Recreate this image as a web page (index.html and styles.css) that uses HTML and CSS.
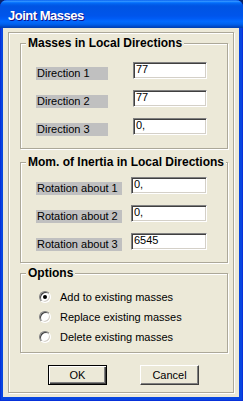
FILE: index.html
```html
<!DOCTYPE html>
<html lang="en">
<head>
    <meta charset="UTF-8">
    <title>Joint Masses</title>
    <link rel="stylesheet" href="styles.css">
</head>
<body>
    <div class="window">
        <div class="titlebar">Joint Masses</div>

        <div class="client">
            <div class="panel">

                <!-- Masses -->
                <fieldset class="group group-masses">
                    <legend>Masses in Local Directions</legend>
                    <div class="rows">
                        <span class="label">Direction 1</span><input class="field" value="77">
                        <span class="label">Direction 2</span><input class="field" value="77">
                        <span class="label">Direction 3</span><input class="field" value="0,">
                    </div>
                </fieldset>

                <!-- Inertia -->
                <fieldset class="group group-inertia">
                    <legend>Mom. of Inertia in Local Directions</legend>
                    <div class="rows">
                        <span class="label">Rotation about 1</span><input class="field" value="0,">
                        <span class="label">Rotation about 2</span><input class="field" value="0,">
                        <span class="label">Rotation about 3</span><input class="field" value="6545">
                    </div>
                </fieldset>

                <!-- Options -->
                <fieldset class="group group-options">
                    <legend>Options</legend>
                    <div class="options">
                        <div class="option"><span class="radio checked"></span>Add to existing masses</div>
                        <div class="option"><span class="radio"></span>Replace existing masses</div>
                        <div class="option"><span class="radio"></span>Delete existing masses</div>
                    </div>
                </fieldset>

                <div class="buttons">
                    <button class="btn btn-default">OK</button>
                    <button class="btn">Cancel</button>
                </div>
            </div>
        </div>
    </div>
</body>
</html>
```

FILE: styles.css
```css
/* Page */
body {
    margin: 0;
    background: #0a246a;
    font-family: "Liberation Sans", Arial, sans-serif;
    font-size: 11px;
    color: #000;
}

/* Window frame */
.window {
    width: 243px;
    height: 401px;
    box-sizing: border-box;
    display: flex;
    flex-direction: column;
    padding: 0 4px 4px 3px;
    background: #0846e0;
    border-radius: 7px 7px 0 0;
    box-shadow: inset 1px 0 #0831d9, inset -1px 0 #0831d9, inset 0 -1px #0831d9;
}

.titlebar {
    height: 28px;
    box-sizing: border-box;
    margin: 0 -4px 0 -3px;
    padding: 3px 0 0 8px;
    line-height: 25px;
    border-radius: 7px 7px 0 0;
    background: linear-gradient(to bottom, #0058ee 0%, #3593ff 4%, #288eff 6%, #127dff 8%, #036ffc 10%, #0262ee 14%, #0057e5 20%, #0054e3 24%, #0055eb 56%, #005bf5 66%, #026afe 76%, #0062ef 86%, #0052d6 92%, #0046c0 96%, #0040b0 100%);
    color: #fff;
    font-size: 13px;
    font-weight: bold;
    letter-spacing: -0.5px;
    text-shadow: 1px 1px #0f1089;
}

.client {
    flex: 1;
    display: flex;
    padding: 4px 5px;
    background: #ece9d8;
}

.panel {
    flex: 1;
    display: flex;
    flex-direction: column;
    padding: 3px 5px 0 11px;
    border: 1px solid #aca899;
    box-shadow: inset 1px 1px #fff, 1px 1px #fff;
}

/* Group boxes */
.group {
    margin: 0;
    padding: 0;
    border: 1px solid #aca899;
    box-shadow: inset 1px 1px #fff, 1px 1px #fff;
}

.group legend {
    margin-left: 5px;
    padding: 0 2px;
    background: #ece9d8;
    font-size: 12px;
    font-weight: bold;
    line-height: 14px;
}

.group-inertia {
    margin-top: 6px;
}

.group-options {
    margin-top: 3px;
}

.rows {
    display: grid;
    align-items: end;
    row-gap: 11px;
    padding-left: 15px;
}

.group-masses .rows {
    grid-template-columns: 72px 74px;
    column-gap: 25px;
    padding-top: 12px;
    padding-bottom: 13px;
}

.group-inertia .rows {
    grid-template-columns: 86px 76px;
    column-gap: 9px;
    padding-top: 8px;
    padding-bottom: 12px;
}

.label {
    height: 13px;
    margin-bottom: -1px;
    padding-left: 1px;
    line-height: 13px;
    background: #c0c0c0;
    white-space: nowrap;
}

.field {
    height: 17px;
    box-sizing: border-box;
    margin: 0;
    padding: 0 2px 3px;
    border: 1px solid;
    border-color: #808080 #fff #fff #808080;
    box-shadow: inset 1px 1px #404040, inset -1px -1px #d4d0c8;
    background: #fff;
    font-family: "Liberation Sans", Arial, sans-serif;
    font-size: 11px;
    color: #000;
    outline: none;
}

/* Options */
.options {
    padding: 7px 0 5px 18px;
}

.option {
    display: flex;
    align-items: center;
    height: 20px;
}

.radio {
    position: relative;
    width: 12px;
    height: 12px;
    box-sizing: border-box;
    margin-right: 9px;
    border: 1px solid;
    border-color: #808080 #fff #fff #808080;
    border-radius: 50%;
    background: #fff;
    box-shadow: inset 1px 1px #404040, inset -1px -1px #d4d0c8;
}

.radio.checked::after {
    content: "";
    position: absolute;
    left: 3px;
    top: 3px;
    width: 4px;
    height: 4px;
    border-radius: 50%;
    background: #000;
}

/* Buttons */
.buttons {
    display: flex;
    gap: 33px;
    margin-top: 12px;
    padding-left: 28px;
}

.btn {
    width: 59px;
    height: 20px;
    padding: 0;
    border: 1px solid;
    border-color: #fff #404040 #404040 #fff;
    box-shadow: inset -1px -1px #808080;
    background: #ece9d8;
    font-family: "Liberation Sans", Arial, sans-serif;
    font-size: 11px;
    color: #000;
}

.btn-default {
    border-color: #000;
    box-shadow: inset 1px 1px #fff, inset -1px -1px #404040, inset -2px -2px #808080;
}
```
